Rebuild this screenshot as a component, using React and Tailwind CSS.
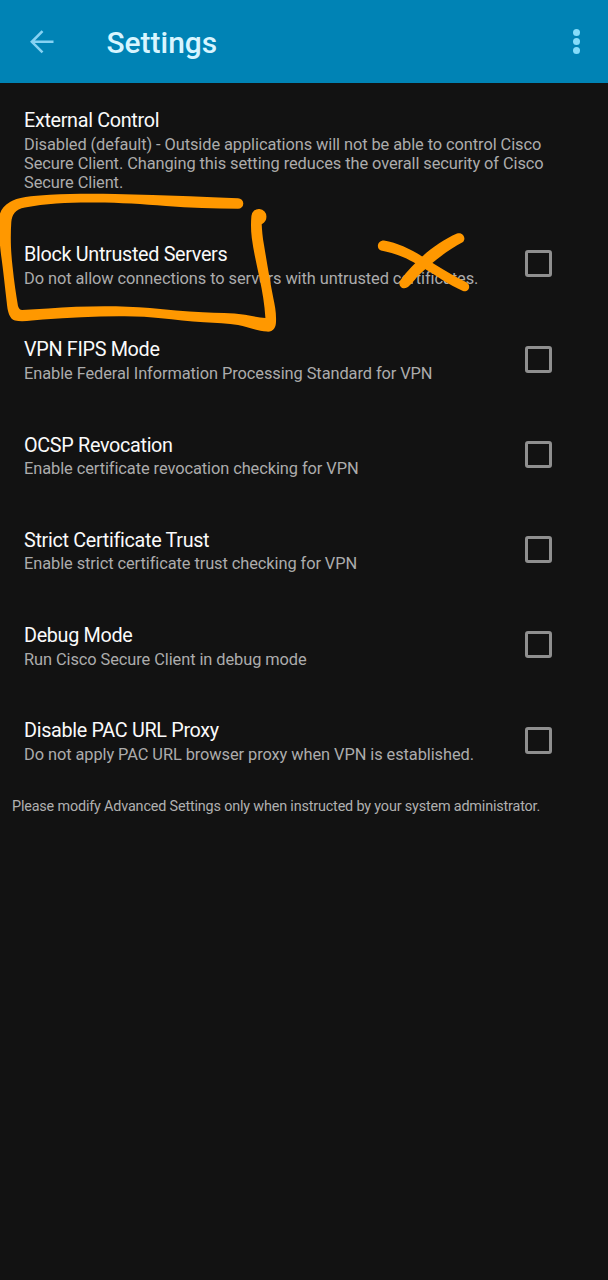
const settings = [
  ["Block Untrusted Servers", "Do not allow connections to servers with untrusted certificates."],
  ["VPN FIPS Mode", "Enable Federal Information Processing Standard for VPN"],
  ["OCSP Revocation", "Enable certificate revocation checking for VPN"],
  ["Strict Certificate Trust", "Enable strict certificate trust checking for VPN"],
  ["Debug Mode", "Run Cisco Secure Client in debug mode"],
  ["Disable PAC URL Proxy", "Do not apply PAC URL browser proxy when VPN is established."],
];

function Header() {
  return (
    <header className="flex h-[83px] items-center bg-[#0083b5] pl-[29px] pr-[28.500px]">
      <button aria-label="Back" className="block">
        <svg className="block h-6 w-[26px]" viewBox="0 0 26 24" fill="none" stroke="#86d2f3" strokeWidth="2.6">
          <path d="M24.500 11.800H2.800M13.500 1.200L2.900 11.800l10.600 10.600" />
        </svg>
      </button>
      <h1 className="ml-[51.500px] mt-[3px] text-[29.900px] font-medium leading-9 text-[#d8f5ff]">Settings</h1>
      <button aria-label="More options" className="ml-auto flex flex-col gap-[2.300px]">
        <span className="size-[6.500px] rounded-full bg-[#85dcfa]" />
        <span className="size-[6.500px] rounded-full bg-[#85dcfa]" />
        <span className="size-[6.500px] rounded-full bg-[#85dcfa]" />
      </button>
    </header>
  );
}

function SettingText({ title, children }) {
  return (
    <div>
      <h2 className="text-[19.800px] leading-6 tracking-[-0.320px] text-[#fafafa]">{title}</h2>
      <p className="mt-[1.500px] text-[16.400px] leading-[19.200px] tracking-[-0.080px] text-[#acacac]">{children}</p>
    </div>
  );
}

function Annotations() {
  return (
    <svg className="pointer-events-none absolute left-0 top-0 h-[340px] w-[608px]" viewBox="0 0 608 340" fill="#ff9800">
      <path d="M238 198.200C220 197.700 205 197 190 196.300C165 195.200 140 194.500 115 194C92 193.500 70 193.700 50 194.700C31 195.800 17 197.200 10 202C2 207 -1 212 -1 221C-1 236 0 248 1.500 258C3.500 273 5 287 6.700 302C7.500 312 9.500 319 15 320.500C22 322 32 320.500 43 319.500C69 317.500 94 316.500 119 316.300C135 316 149 317 161 318.200C175 319.500 189 321.500 204 322.300C216 323 228 323.300 238 325C248 327 257 331 267 331.600C273 332 275.800 328 276 322C276.400 313 275 306 273.300 298C270 281 267 263 264 245C262.500 237 262 230 261.700 224.300C265 222.500 266.400 220 266.400 217A7.500 7.500 0 0 0 251.400 216C250.800 223 250.800 230 251.800 238C253.500 251 256.500 264 259.500 278C262.500 292 264.500 304 265.400 318C260 317.800 252 316 245 314.800C231 312.500 217 313 203 312.200C185 311.500 167 309.500 150 308C126 306 101 305.800 76 306.800C57 307.500 39 309.500 22 310C19 309.500 19 308 18 306C16 294 14 281 12.600 267C10.500 249 10.500 235 11.300 222C12 215 15 209 25 207.500C47 203 72 202.300 96 202.500C121 202.700 142 204 166 206C190 208 214 208.200 238 208.800A5.300 5.300 0 0 0 238 198.200Z" />
      <path d="M384 240.500C402 243.500 419 254 435 264.500C447 272 457 277.500 467 282.500C471.500 286 468.500 292.500 463 291C449 285 437 276 425 269C410 260 400 254 381 250.500C376 248.500 377 240.500 384 240.500Z" />
      <path d="M457 233.500C463 231.500 466.500 238.500 463 242C445 252 431 263 418 276C413.500 281 410.500 285.500 407 287.500C402 290.500 397 284.500 400.500 280C414 262 435 243 457 233.500Z" />
    </svg>
  );
}

export default function App() {
  return (
    <main className="relative min-h-[1280px] w-full overflow-hidden bg-[#121212] font-['Roboto',sans-serif]">
      <Header />
      <section className="h-[133.200px] pl-6 pr-14 pt-[26px]">
        <SettingText title="External Control">
          Disabled (default) - Outside applications will not be able to control Cisco Secure Client. Changing this setting reduces the overall security of Cisco Secure Client.
        </SettingText>
      </section>
      {settings.map(([title, description]) => (
        <label key={title} className="flex h-[95.250px] items-center justify-between pl-6 pr-[56.500px]">
          <div className="pt-[3.500px]">
            <SettingText title={title}>{description}</SettingText>
          </div>
          <input type="checkbox" className="size-[27px] shrink-0 appearance-none rounded-[3px] border-[3px] border-[#8f8f8f]" />
        </label>
      ))}
      <p className="pl-3 pt-[9px] text-[14.400px] leading-5 tracking-[-0.170px] text-[#b0b0b0]">
        Please modify Advanced Settings only when instructed by your system administrator.
      </p>
      <Annotations />
    </main>
  );
}
